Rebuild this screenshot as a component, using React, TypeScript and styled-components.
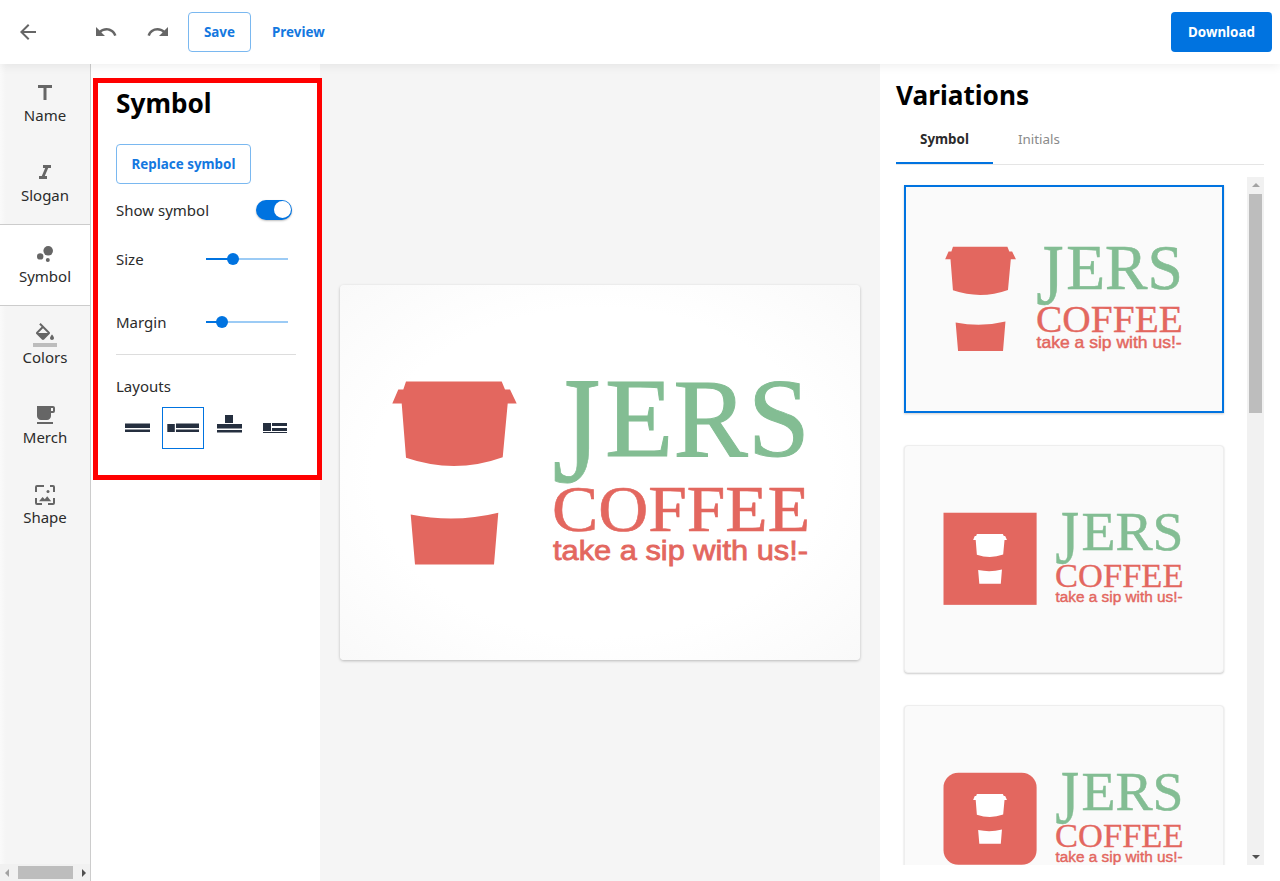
import React from "react";
import styled, { createGlobalStyle } from "styled-components";
import { MdArrowBack, MdUndo, MdRedo, MdTitle, MdFormatItalic, MdBubbleChart, MdLocalCafe } from "react-icons/md";

const FONT = `"Noto Sans", "Open Sans", sans-serif`;

const Global = createGlobalStyle`
  html, body { margin: 0; padding: 0; background: #fff; }
  body { font-family: ${FONT}; color: #222; }
  * { box-sizing: border-box; }
`;

const BLUE = "#0073e0";
const ICON = "#666";
const DARK = "#252f3f";

const Page = styled.div`
  width: 1280px;
  height: 881px;
  display: flex;
  flex-direction: column;
  overflow: hidden;
`;
const TopBar = styled.header`
  height: 64px;
  flex: none;
  display: flex;
  align-items: center;
  padding: 0 8px 0 16px;
  background: #fff;
  box-shadow: 0 2px 10px rgba(0, 0, 0, 0.07);
  position: relative;
  z-index: 2;
`;
const IconButton = styled.button<{ $left?: number }>`
  width: 24px;
  height: 24px;
  padding: 0;
  margin-left: ${(p) => p.$left ?? 0}px;
  border: 0;
  background: none;
  color: ${ICON};
  display: flex;
`;
const OutlineButton = styled.button<{ $width: number }>`
  width: ${(p) => p.$width}px;
  height: 40px;
  padding: 0;
  border: 1px solid #7ab8f0;
  border-radius: 4px;
  background: #fff;
  color: #1478e0;
  font: 700 13.4px ${FONT};
`;
const SaveWrap = styled.div`
  margin-left: 18px;
`;
const TextButton = styled.button`
  margin-left: 21px;
  padding: 0;
  border: 0;
  background: none;
  color: #1478e0;
  font: 700 13.4px ${FONT};
`;
const DownloadButton = styled.button`
  margin-left: auto;
  width: 101px;
  height: 40px;
  border: 0;
  border-radius: 4px;
  background: ${BLUE};
  color: #fff;
  font: 700 13.4px ${FONT};
`;
const Body = styled.div`
  flex: 1;
  display: flex;
  min-height: 0;
`;
const Nav = styled.nav`
  width: 91px;
  flex: none;
  display: flex;
  flex-direction: column;
  background: linear-gradient(90deg, #fafafa, #f5f5f5 6px);
  border-right: 1px solid #ccc;
`;
const NavItem = styled.div<{ $active?: boolean }>`
  height: ${(p) => (p.$active ? 82 : 80)}px;
  display: flex;
  flex-direction: column;
  align-items: center;
  padding-top: 17px;
  color: ${ICON};
  background: ${(p) => (p.$active ? "#fff" : "transparent")};
  border-top: ${(p) => (p.$active ? "1px solid #ccc" : "0")};
  border-bottom: ${(p) => (p.$active ? "1px solid #ccc" : "0")};
`;
const NavLabel = styled.span`
  font-size: 15px;
  line-height: 20px;
  color: #2b2b2b;
`;
const HScroll = styled.div`
  margin-top: auto;
  height: 17px;
  display: flex;
  align-items: center;
  justify-content: space-between;
  padding: 0 4px 0 5px;
  background: #f1f1f1;
`;
const HThumb = styled.div`
  width: 55px;
  height: 13px;
  background: #bdbdbd;
`;
const Arrow = styled.i<{ $dir: "left" | "right" | "up" | "down" }>`
  width: 0;
  height: 0;
  display: block;
  border: 4px solid transparent;
  ${(p) =>
    p.$dir === "left"
      ? "border-left-width:0;border-right-color:#a3a3a3;"
      : p.$dir === "right"
      ? "border-right-width:0;border-left-color:#505050;"
      : p.$dir === "up"
      ? "border-top-width:0;border-bottom-color:#a3a3a3;"
      : "border-bottom-width:0;border-top-color:#505050;"}
`;
const Panel = styled.section`
  width: 229px;
  flex: none;
  position: relative;
  padding: 20px 24px 0 25px;
  background: #fff;
`;
const RedFrame = styled.div`
  position: absolute;
  left: 2px;
  top: 14px;
  width: 229px;
  height: 402px;
  border: 5px solid #ff0000;
  pointer-events: none;
  z-index: 3;
`;
const Heading = styled.h1`
  margin: 0;
  font-size: 26.2px;
  line-height: 38px;
  font-weight: 700;
  color: #000;
`;
const ReplaceWrap = styled.div`
  margin-top: 22px;
`;
const Row = styled.div<{ $top: number }>`
  margin-top: ${(p) => p.$top}px;
  height: 40px;
  display: flex;
  align-items: center;
`;
const RowLabel = styled.span`
  font-size: 15px;
  color: #2b2b2b;
`;
const SliderLabel = styled(RowLabel)`
  width: 90px;
`;
const Toggle = styled.div`
  width: 36px;
  height: 20px;
  margin: -1px 4px 0 auto;
  border-radius: 10px;
  background: ${BLUE};
  display: flex;
  align-items: center;
  justify-content: flex-end;
  padding-right: 1px;
  box-shadow: 0 1px 2px rgba(0, 0, 0, 0.25);
`;
const Knob = styled.div`
  width: 17px;
  height: 17px;
  border-radius: 50%;
  background: #fff;
`;
const Track = styled.div`
  width: 82px;
  height: 2px;
  background: #9ccbf5;
  display: flex;
  align-items: center;
`;
const TrackFill = styled.div<{ $pct: number }>`
  width: ${(p) => p.$pct}%;
  height: 2px;
  background: ${BLUE};
`;
const Thumb = styled.div`
  width: 12px;
  height: 12px;
  margin-left: -6px;
  flex: none;
  border-radius: 50%;
  background: ${BLUE};
`;
const Divider = styled.hr`
  margin: 12px 0 0;
  border: 0;
  border-top: 1px solid #ddd;
`;
const LayoutsLabel = styled(RowLabel)`
  display: block;
  margin-top: 21px;
  line-height: 20px;
`;
const LayoutGrid = styled.div`
  margin-top: 11px;
  display: flex;
  gap: 4px;
`;
const LayoutOption = styled.div<{ $selected?: boolean }>`
  width: 42px;
  height: 42px;
  border: 1px solid ${(p) => (p.$selected ? BLUE : "transparent")};
  color: ${DARK};
`;
const Canvas = styled.main`
  width: 560px;
  flex: none;
  display: flex;
  align-items: center;
  justify-content: center;
  background: #f5f5f5;
`;
const MainCard = styled.div`
  width: 520px;
  height: 375px;
  display: flex;
  align-items: center;
  justify-content: center;
  border-radius: 4px;
  background: radial-gradient(ellipse at center, #fff 62%, #f9f9f9 100%);
  box-shadow: 0 1px 3px rgba(0, 0, 0, 0.25);
`;
const Side = styled.aside`
  width: 400px;
  flex: none;
  padding: 12px 16px 16px;
  display: flex;
  flex-direction: column;
  background: #fff;
`;
const Tabs = styled.div`
  height: 51px;
  flex: none;
  display: flex;
  border-bottom: 1px solid #e5e5e5;
`;
const Tab = styled.div<{ $active?: boolean }>`
  height: 50px;
  width: ${(p) => (p.$active ? 97 : 90)}px;
  margin-right: 1px;
  padding: 2px 0 0 24px;
  display: flex;
  align-items: center;
  font-size: 13.4px;
  font-weight: ${(p) => (p.$active ? 700 : 400)};
  color: ${(p) => (p.$active ? "#2b2b2b" : "#8a8a8a")};
  border-bottom: 2px solid ${(p) => (p.$active ? BLUE : "transparent")};
`;
const ListArea = styled.div`
  margin-top: 12px;
  flex: 1;
  min-height: 0;
  display: flex;
`;
const List = styled.div`
  flex: 1;
  overflow: hidden;
  padding: 8px 0 0 7.5px;
  display: flex;
  flex-direction: column;
  gap: 32px;
`;
const VariationCard = styled.div<{ $selected?: boolean }>`
  width: 320px;
  height: 228px;
  flex: none;
  display: flex;
  align-items: center;
  justify-content: center;
  background: #fafafa;
  border-radius: ${(p) => (p.$selected ? "0" : "4px")};
  border: ${(p) => (p.$selected ? `2px solid ${BLUE}` : "1px solid #eeeeee")};
  box-shadow: 0 1px 2px rgba(0, 0, 0, 0.2);
`;
const VScroll = styled.div`
  width: 17px;
  flex: none;
  display: flex;
  flex-direction: column;
  align-items: center;
  background: #f1f1f1;
  padding-top: 6px;
`;
const VThumb = styled.div`
  width: 13px;
  height: 219px;
  margin-top: 7px;
  background: #bdbdbd;
`;
const VDown = styled.div`
  margin-top: auto;
  margin-bottom: 6px;
`;

const CUP_TOP =
  "M406 381H501.7L505 389H510L516.7 403H507.7L502.7 456.7Q455 474 406 457.3L401.7 403H392.3L398.3 389H403.3Z";
const CUP_BOTTOM = "M410.7 514Q455 523 498.3 512.3L494 564H415Z";
const SERIF = "'Liberation Serif', serif";

const LogoText = () => (
  <>
    <text transform="translate(552.5 481.5) scale(1.1 1.36)" fontFamily={SERIF} fontSize="112" fill="#83bd93" stroke="#83bd93" strokeWidth="0.6">
      J
    </text>
    <text x="605" y="455.5" fontFamily={SERIF} fontSize="112" fill="#83bd93" stroke="#83bd93" strokeWidth="1" textLength="205" lengthAdjust="spacingAndGlyphs">
      ERS
    </text>
    <text x="552" y="530" fontFamily={SERIF} fontSize="66" fill="#e3675f" stroke="#e3675f" strokeWidth="0.6" textLength="258" lengthAdjust="spacingAndGlyphs">
      COFFEE
    </text>
    <text x="553" y="559.5" fontFamily="'Liberation Sans', sans-serif" fontSize="28" fill="#e3675f" stroke="#e3675f" strokeWidth="0.8" textLength="255" lengthAdjust="spacingAndGlyphs">
      take a sip with us!-
    </text>
  </>
);

const Logo = ({ scale, badge }: { scale: number; badge?: "square" | "round" }) =>
  badge ? (
    <svg width={490 * scale} height={200 * scale} viewBox="323 372.5 490 200">
      <rect x="328" y="380" width="187" height="185" rx={badge === "round" ? 30 : 0} fill="#e3675f" />
      <g transform="translate(421.5 472.5) scale(0.546) translate(-454.5 -472.5)" fill="#fff">
        <path d={CUP_TOP} />
        <path d={CUP_BOTTOM} />
      </g>
      <LogoText />
    </svg>
  ) : (
    <svg width={430 * scale} height={200 * scale} viewBox="385 372.5 430 200">
      <g fill="#e3675f">
        <path d={CUP_TOP} />
        <path d={CUP_BOTTOM} />
      </g>
      <LogoText />
    </svg>
  );

const BucketIcon = () => (
  <svg width="24" height="24" viewBox="0 0 24 24">
    <path
      fill="currentColor"
      d="M16.56 8.94L7.62 0 6.21 1.41l2.38 2.38-5.15 5.15c-.59.59-.59 1.54 0 2.12l5.5 5.5c.29.29.68.44 1.06.44s.77-.15 1.06-.44l5.5-5.5c.59-.58.59-1.53 0-2.12zM5.21 10L10 5.21 14.79 10H5.21zM19 11.5s-2 2.17-2 3.5c0 1.1.9 2 2 2s2-.9 2-2c0-1.33-2-3.5-2-3.5z"
    />
    <path fill="#bdbdbd" d="M0 20h24v4H0z" />
  </svg>
);

const ShapeIcon = () => (
  <svg width="24" height="24" viewBox="0 0 24 24" fill="none">
    <path
      stroke="currentColor"
      strokeWidth="2"
      d="M3 9V4a1 1 0 0 1 1-1h7M17 3h3a1 1 0 0 1 1 1v5M21 15v5a1 1 0 0 1-1 1h-5M9 21H4a1 1 0 0 1-1-1v-5"
    />
    <circle cx="15" cy="8.6" r="1.5" fill="currentColor" />
    <path fill="currentColor" d="M6 18.3l3.6-4.2 2.2 2.2 2.4-3 4 5z" />
  </svg>
);

const LayoutIcon = ({ kind }: { kind: number }) => (
  <svg width="40" height="40" viewBox="0 0 40 40" fill="currentColor">
    {kind === 0 && (
      <>
        <rect x="8" y="15.5" width="25" height="4.5" />
        <rect x="8" y="21.5" width="25" height="2.5" />
      </>
    )}
    {kind === 1 && (
      <>
        <rect x="4.3" y="16" width="7.5" height="8" />
        <rect x="13" y="15.5" width="23" height="4.5" />
        <rect x="13" y="21.5" width="23" height="2.5" />
      </>
    )}
    {kind === 2 && (
      <>
        <rect x="16" y="7" width="8" height="8" />
        <rect x="8" y="16" width="25" height="4.5" />
        <rect x="8" y="22" width="25" height="2.5" />
      </>
    )}
    {kind === 3 && (
      <>
        <rect x="8" y="15" width="8" height="8" />
        <rect x="17" y="15" width="15" height="3" />
        <rect x="17" y="20" width="15" height="3" />
        <rect x="8" y="24" width="24" height="1" />
      </>
    )}
  </svg>
);

const navItems: { label: string; icon: React.ReactNode; active?: boolean }[] = [
  { label: "Name", icon: <MdTitle size={24} /> },
  { label: "Slogan", icon: <MdFormatItalic size={24} /> },
  { label: "Symbol", icon: <MdBubbleChart size={24} />, active: true },
  { label: "Colors", icon: <BucketIcon /> },
  { label: "Merch", icon: <MdLocalCafe size={24} /> },
  { label: "Shape", icon: <ShapeIcon /> },
];

export default function App() {
  return (
    <Page>
      <Global />
      <TopBar>
        <IconButton><MdArrowBack size={24} /></IconButton>
        <IconButton $left={54}><MdUndo size={24} /></IconButton>
        <IconButton $left={28}><MdRedo size={24} /></IconButton>
        <SaveWrap><OutlineButton $width={63}>Save</OutlineButton></SaveWrap>
        <TextButton>Preview</TextButton>
        <DownloadButton>Download</DownloadButton>
      </TopBar>
      <Body>
        <Nav>
          {navItems.map((n) => (
            <NavItem key={n.label} $active={n.active}>
              {n.icon}
              <NavLabel>{n.label}</NavLabel>
            </NavItem>
          ))}
          <HScroll>
            <Arrow $dir="left" />
            <HThumb />
            <Arrow $dir="right" />
          </HScroll>
        </Nav>
        <Panel>
          <RedFrame />
          <Heading>Symbol</Heading>
          <ReplaceWrap><OutlineButton $width={135}>Replace symbol</OutlineButton></ReplaceWrap>
          <Row $top={6}>
            <RowLabel>Show symbol</RowLabel>
            <Toggle><Knob /></Toggle>
          </Row>
          <Row $top={9}>
            <SliderLabel>Size</SliderLabel>
            <Track><TrackFill $pct={33} /><Thumb /></Track>
          </Row>
          <Row $top={23}>
            <SliderLabel>Margin</SliderLabel>
            <Track><TrackFill $pct={19.5} /><Thumb /></Track>
          </Row>
          <Divider />
          <LayoutsLabel>Layouts</LayoutsLabel>
          <LayoutGrid>
            {[0, 1, 2, 3].map((k) => (
              <LayoutOption key={k} $selected={k === 1}><LayoutIcon kind={k} /></LayoutOption>
            ))}
          </LayoutGrid>
        </Panel>
        <Canvas>
          <MainCard><Logo scale={1} /></MainCard>
        </Canvas>
        <Side>
          <Heading>Variations</Heading>
          <Tabs>
            <Tab $active>Symbol</Tab>
            <Tab>Initials</Tab>
          </Tabs>
          <ListArea>
            <List>
              <VariationCard $selected><Logo scale={0.569} /></VariationCard>
              <VariationCard><Logo scale={0.498} badge="square" /></VariationCard>
              <VariationCard><Logo scale={0.498} badge="round" /></VariationCard>
            </List>
            <VScroll>
              <Arrow $dir="up" />
              <VThumb />
              <VDown><Arrow $dir="down" /></VDown>
            </VScroll>
          </ListArea>
        </Side>
      </Body>
    </Page>
  );
}
